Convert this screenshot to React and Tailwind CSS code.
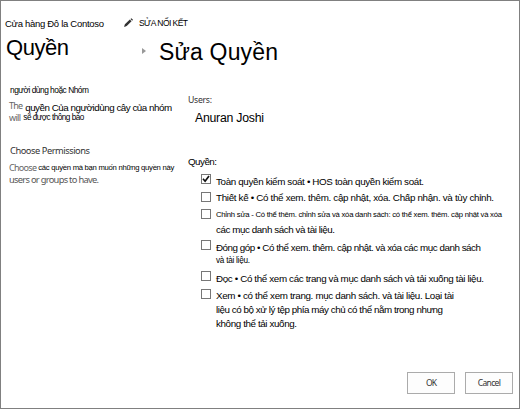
import { useLayoutEffect, useRef } from "react";

// A single line of text, tracked so that it fills exactly `width` pixels.
function Line({ width, className = "", children }) {
  const ref = useRef(null);
  useLayoutEffect(() => {
    const el = ref.current;
    el.style.letterSpacing = "0px";
    const natural = el.getBoundingClientRect().width;
    el.style.letterSpacing = `${(width - natural) / (children.length - 1)}px`;
  }, [width, children]);
  return (
    <div className={`whitespace-pre leading-[12px] ${className}`}>
      <span ref={ref}>{children}</span>
    </div>
  );
}

const ui = "font-['Noto_Sans',sans-serif]";

function Option({ checked, className = "", children }) {
  return (
    <div className={`flex ${className}`}>
      <span className="mr-[5px] ml-[13px] size-[10px] shrink-0 border border-[#777] bg-white">
        {checked && (
          <svg viewBox="0 0 8 8" className="block size-2" fill="none" stroke="#111" strokeWidth="1.7">
            <path d="M1 3.8 3.1 6.2 7 1" />
          </svg>
        )}
      </span>
      <div>{children}</div>
    </div>
  );
}

function Button({ width, children }) {
  return (
    <button className="flex h-[22px] w-12 items-center justify-center border border-[#ababab] bg-[#fdfdfd] text-[#333]">
      <Line width={width} className={`${ui} text-[8.5px]`}>{children}</Line>
    </button>
  );
}

export default function App() {
  return (
    <div className="flex h-[409px] w-[520px] flex-col overflow-hidden border border-[#808080] bg-white font-['Liberation_Sans',Arial,sans-serif] text-black">
      <header className="flex h-[83px] shrink-0 pt-4 pl-1">
        <div className="w-[119px]">
          <Line width={99} className="mt-px text-[9.5px]">Cửa hàng Đô la Contoso</Line>
          <Line width={63} className="mt-[6px] ml-px text-[22px] leading-[24px]">Quyền</Line>
        </div>
        <div className="flex w-[30px] flex-col">
          <svg viewBox="0 0 10 10" className="mt-px size-[9px]" fill="#333">
            <path d="M0 10 1 7 6.5 1.8 8.4 3.7 3 9ZM7.2 1.1 8.2.2 10 2 9.1 3Z" />
          </svg>
          <svg viewBox="0 0 4 6" className="mt-[21px] ml-[18px] h-[6px] w-1" fill="#999">
            <path d="M0 0 4 3 0 6Z" />
          </svg>
        </div>
        <div>
          <Line width={49} className="-ml-[15px] text-[8.5px]">SỬA NỐI KẾT</Line>
          <Line width={119} className="mt-[11px] ml-[5px] text-[23px] leading-[24px]">Sửa Quyền</Line>
        </div>
      </header>

      <main className="flex flex-1 pl-2">
        <section className="w-[179px] shrink-0">
          <Line width={79} className="ml-px text-[8.4px]">người dùng hoặc Nhóm</Line>
          <div className="mt-[5px] flex h-[11px] gap-[3px]">
            <Line width={14} className={`${ui} -mt-px text-[9px] text-[#666]`}>The</Line>
            <Line width={147} className="mt-px text-[9.8px]">quyền Của ngườidùng cây của nhóm</Line>
          </div>
          <div className="flex h-3 gap-[3px]">
            <Line width={12} className={`${ui} text-[9px] text-[#666]`}>will</Line>
            <Line width={61} className="text-[8.2px]">sẽ được thông báo</Line>
          </div>
          <Line width={80} className={`${ui} mt-[21px] ml-px text-[9.3px] text-[#333]`}>Choose Permissions</Line>
          <div className="mt-[5px] flex h-3 gap-[2px]">
            <Line width={28} className={`${ui} text-[9px] text-[#666]`}>Choose</Line>
            <Line width={136} className="text-[7.7px]">các quyền mà bạn muốn những quyền này</Line>
          </div>
          <Line width={90} className={`${ui} text-[9.3px] text-[#555]`}>users or groups to have.</Line>
        </section>

        <section>
          <Line width={24} className={`${ui} mt-[10px] text-[8.7px] text-[#333]`}>Users:</Line>
          <Line width={69} className="mt-[6px] ml-[7px] text-[12.3px]">Anuran Joshi</Line>
          <Line width={29} className="mt-8 text-[9.8px]">Quyền:</Line>
          <div className="mt-[6px] text-[9.8px]">
            <Option checked className="h-[18px]">
              <Line width={208} className="mt-[2px]">Toàn quyền kiểm soát • HOS toàn quyền kiểm soát.</Line>
            </Option>
            <Option className="h-[17px]">
              <Line width={278}>Thiết kế • Có thể xem. thêm. cập nhật, xóa. Chấp nhận. và tùy chỉnh.</Line>
            </Option>
            <Option className="h-[31px]">
              <Line width={286} className="text-[7.7px]">Chỉnh sửa - Có thể thêm. chỉnh sửa và xóa danh sách: có thể xem. thêm. cập nhật và xóa</Line>
              <Line width={119} className="mt-[3px]">các mục danh sách và tài liệu.</Line>
            </Option>
            <Option className="h-[31px]">
              <Line width={265} className="mt-[2px]">Đóng góp • Có thể xem. thêm. cập nhật. và xóa các mục danh sách</Line>
              <Line width={34} className="mt-px text-[8.2px]">và tài liệu.</Line>
            </Option>
            <Option className="h-[18px]">
              <Line width={268} className="mt-[2px]">Đọc • Có thể xem các trang và mục danh sách và tải xuống tài liệu.</Line>
            </Option>
            <Option>
              <Line width={238} className="mt-px">Xem • có thể xem trang. mục danh sách. và tài liệu. Loại tài</Line>
              <Line width={227} className="mt-[2px]">liệu có bộ xử lý tệp phía máy chủ có thể nằm trong nhưng</Line>
              <Line width={81} className="mt-[2px]">không thể tải xuống.</Line>
            </Option>
          </div>
        </section>
      </main>

      <footer className="flex shrink-0 justify-end gap-[10px] pr-[6px] pb-[14px]">
        <Button width={11}>OK</Button>
        <Button width={23}>Cancel</Button>
      </footer>
    </div>
  );
}
